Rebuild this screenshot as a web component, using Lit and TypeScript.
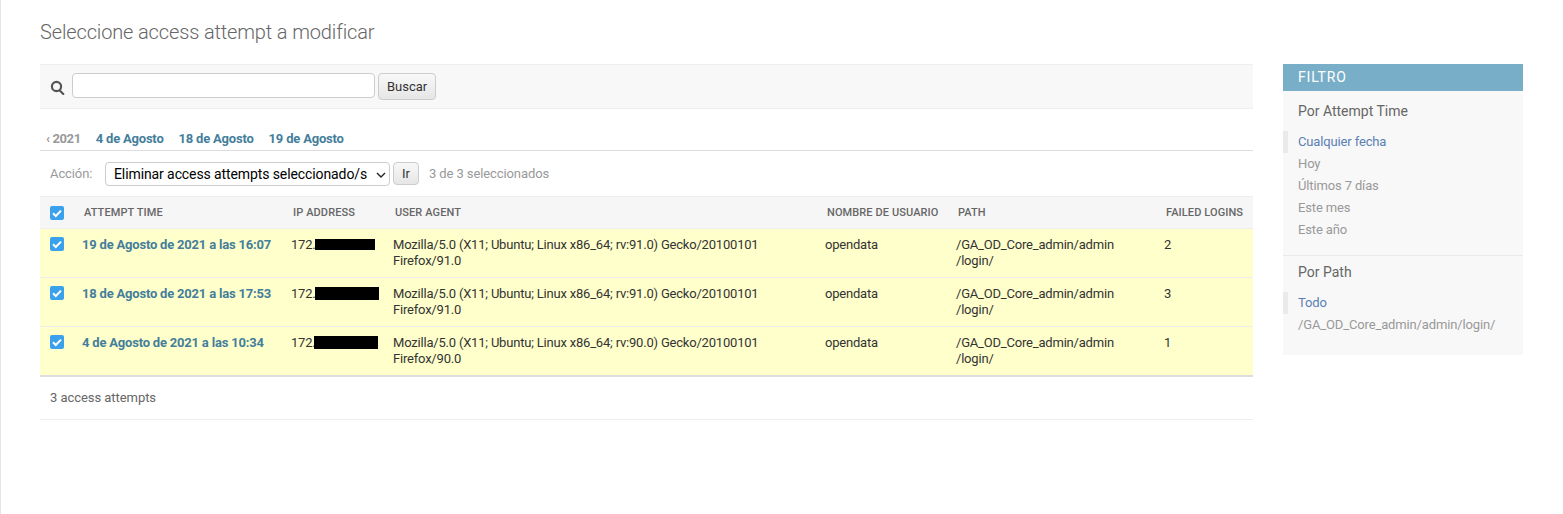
import { LitElement, html, css, svg } from 'lit';
import { customElement } from 'lit/decorators.js';

const rows = [
  { time: '19 de Agosto de 2021 a las 16:07', mask: 'short', agent: 'Mozilla/5.0 (X11; Ubuntu; Linux x86_64; rv:91.0) Gecko/20100101 Firefox/91.0', fails: 2 },
  { time: '18 de Agosto de 2021 a las 17:53', mask: 'long', agent: 'Mozilla/5.0 (X11; Ubuntu; Linux x86_64; rv:91.0) Gecko/20100101 Firefox/91.0', fails: 3 },
  { time: '4 de Agosto de 2021 a las 10:34', mask: 'long tight', agent: 'Mozilla/5.0 (X11; Ubuntu; Linux x86_64; rv:90.0) Gecko/20100101 Firefox/90.0', fails: 1 },
];

const searchIcon = svg`<path d="M6.5 0.8a5.7 5.7 0 1 0 0 11.4a5.7 5.7 0 0 0 0-11.4zm0 2.2a3.5 3.5 0 1 1 0 7a3.5 3.5 0 0 1 0-7z" fill="#555"/><path d="M10 9.2l4 4a1 1 0 0 1-1.5 1.5l-4-4z" fill="#555"/>`;

@customElement('app-root')
export class AppRoot extends LitElement {
  static styles = css`
    :host {
      display: block;
      min-height: 514px;
      box-sizing: border-box;
      border-left: 1px solid #e6e6e6;
      padding: 20px 40px 0 39px;
      font-family: Roboto, "Liberation Sans", sans-serif;
      font-size: 13px;
      color: #333;
    }

    h1 {
      margin: 0 0 20px;
      font-size: 20px;
      line-height: 24px;
      font-weight: 300;
      letter-spacing: -0.14px;
      color: #666;
    }

    .columns {
      display: flex;
      gap: 30px;
      align-items: flex-start;
    }

    .main {
      flex: 1;
      min-width: 0;
    }

    .toolbar {
      display: flex;
      align-items: center;
      height: 43px;
      padding-left: 10px;
      background: #f8f8f8;
      border-top: 1px solid #eee;
      border-bottom: 1px solid #eee;
    }

    .toolbar svg {
      width: 15px;
      height: 15px;
      margin: 2px 7px 0 0;
    }

    .toolbar input {
      box-sizing: border-box;
      width: 303px;
      height: 25px;
      margin: 0 3px 2px 0;
      border: 1px solid #ccc;
      border-radius: 4px;
      background: #fff;
    }

    .btn {
      box-sizing: border-box;
      margin: 0;
      border: 1px solid #ccc;
      border-radius: 4px;
      background: linear-gradient(#f8f8f8, #e6e6e6);
      font: 13px Roboto, sans-serif;
      color: #333;
      padding: 0 8px;
    }

    .toolbar .btn {
      width: 58px;
      height: 27px;
    }

    .dates {
      display: flex;
      gap: 15px;
      height: 42px;
      padding: 0 6px;
      align-items: flex-end;
      border-bottom: 1px solid #ddd;
      box-sizing: border-box;
      font-weight: 700;
      line-height: 22px;
      letter-spacing: -0.2px;
      color: #447e9b;
    }

    .dates .back {
      color: #999;
      letter-spacing: -0.4px;
    }

    .actions {
      display: flex;
      align-items: center;
      height: 45px;
      padding-left: 10px;
      color: #999;
      box-sizing: border-box;
      letter-spacing: -0.1px;
    }

    .actions label {
      width: 55px;
    }

    .actions select {
      appearance: none;
      box-sizing: border-box;
      width: 285px;
      height: 24px;
      margin: 0 3px 0 0;
      padding: 0 0 0 8px;
      border: 1px solid #ccc;
      border-radius: 4px;
      background: #fff url("data:image/svg+xml,%3Csvg xmlns='http://www.w3.org/2000/svg' width='10' height='6'%3E%3Cpath d='M1 1l4 4 4-4' fill='none' stroke='%23222' stroke-width='1.4'/%3E%3C/svg%3E") no-repeat 270px 9px;
      font: 14px Roboto, sans-serif;
      letter-spacing: -0.1px;
      color: #000;
    }

    .actions .btn {
      width: 26px;
      height: 23px;
      padding: 0;
    }

    .count {
      margin-left: 10px;
    }

    table {
      width: 100%;
      table-layout: fixed;
      border-collapse: collapse;
    }

    th {
      height: 32px;
      padding: 0 10px 0 12px;
      box-sizing: border-box;
      background: #f6f6f6;
      border-top: 1px solid #eee;
      border-bottom: 1px solid #eee;
      text-align: left;
      font-size: 11px;
      font-weight: 500;
      letter-spacing: 0.1px;
      color: #666;
      text-transform: uppercase;
      white-space: nowrap;
    }

    td {
      height: 49px;
      padding: 8px 10px 0;
      box-sizing: border-box;
      background: #ffc;
      border-bottom: 1px solid #eee;
      vertical-align: top;
      line-height: 16px;
      letter-spacing: -0.2px;
    }

    tr:last-child td {
      border-bottom: 2px solid #ddd;
    }

    th.check,
    td.check {
      padding: 0 0 0 10px;
    }

    td.check {
      padding-top: 8px;
    }

    .box {
      display: block;
      width: 14px;
      height: 14px;
    }

    td.time {
      font-weight: 700;
      color: #447e9b;
      white-space: nowrap;
    }

    td.ip {
      white-space: nowrap;
    }

    .mask {
      display: inline-block;
      margin-left: -1px;
      background: #000;
      vertical-align: -1px;
    }

    .mask.short {
      width: 60px;
      height: 11px;
    }

    .mask.long {
      width: 64px;
      height: 13px;
      vertical-align: -2px;
    }

    .mask.tight {
      margin-left: -2px;
    }

    .paginator {
      height: 43px;
      padding-left: 10px;
      display: flex;
      align-items: center;
      box-sizing: border-box;
      border-bottom: 1px solid #eee;
      letter-spacing: -0.05px;
      color: #666;
    }

    aside {
      width: 240px;
      flex: none;
      background: #f8f8f8;
      padding-bottom: 5px;
    }

    aside h2 {
      margin: 0;
      height: 27px;
      padding-left: 15px;
      background: #79aec8;
      color: #fff;
      font-size: 14px;
      font-weight: 400;
      line-height: 27px;
      letter-spacing: 0.8px;
    }

    aside h3 {
      margin: 0;
      padding: 12px 15px 0;
      font-size: 14px;
      font-weight: 400;
      line-height: 16px;
      color: #666;
    }

    aside ul {
      list-style: none;
      margin: 0;
      padding: 12px 0 14px;
    }

    aside ul + h3 {
      border-top: 1px solid #eaeaea;
      padding-top: 8px;
    }

    aside li {
      height: 22px;
      padding-left: 15px;
      line-height: 22px;
      letter-spacing: -0.14px;
      color: #999;
      white-space: nowrap;
    }

    aside li.selected {
      padding-left: 10px;
      border-left: 5px solid #eaeaea;
      color: #5b80b2;
    }
  `;

  render() {
    return html`
      <h1>Seleccione access attempt a modificar</h1>
      <div class="columns">
        <div class="main">
          <div class="toolbar">
            <svg viewBox="0 0 15 15">${searchIcon}</svg>
            <input type="text" />
            <button class="btn">Buscar</button>
          </div>
          <div class="dates">
            <span class="back">‹ 2021</span>
            <span>4 de Agosto</span>
            <span>18 de Agosto</span>
            <span>19 de Agosto</span>
          </div>
          <div class="actions">
            <label>Acción:</label>
            <select><option>Eliminar access attempts seleccionado/s</option></select>
            <button class="btn">Ir</button>
            <span class="count">3 de 3 seleccionados</span>
          </div>
          <table>
            <colgroup>
              <col style="width: 32px" />
              <col style="width: 209px" />
              <col style="width: 102px" />
              <col style="width: 432px" />
              <col style="width: 131px" />
              <col style="width: 208px" />
              <col />
            </colgroup>
            <thead>
              <tr>
                <th class="check">${this.checkbox()}</th>
                <th>Attempt time</th>
                <th>IP address</th>
                <th>User agent</th>
                <th>Nombre de usuario</th>
                <th>Path</th>
                <th>Failed logins</th>
              </tr>
            </thead>
            <tbody>
              ${rows.map(
                (r) => html`
                  <tr>
                    <td class="check">${this.checkbox()}</td>
                    <td class="time">${r.time}</td>
                    <td class="ip">172.<span class="mask ${r.mask}"></span></td>
                    <td>${r.agent}</td>
                    <td>opendata</td>
                    <td>/GA_OD_Core_admin/admin<br />/login/</td>
                    <td>${r.fails}</td>
                  </tr>
                `
              )}
            </tbody>
          </table>
          <div class="paginator">3 access attempts</div>
        </div>
        <aside>
          <h2>FILTRO</h2>
          <h3>Por Attempt Time</h3>
          <ul>
            <li class="selected">Cualquier fecha</li>
            <li>Hoy</li>
            <li>Últimos 7 días</li>
            <li>Este mes</li>
            <li>Este año</li>
          </ul>
          <h3>Por Path</h3>
          <ul>
            <li class="selected">Todo</li>
            <li>/GA_OD_Core_admin/admin/login/</li>
          </ul>
        </aside>
      </div>
    `;
  }

  checkbox() {
    return html`<svg class="box" viewBox="0 0 14 14">
      <rect width="14" height="14" rx="2" fill="#3aa2ec" />
      <path d="M3 7.3l2.8 2.7L11 4.6" fill="none" stroke="#fff" stroke-width="2" />
    </svg>`;
  }
}
